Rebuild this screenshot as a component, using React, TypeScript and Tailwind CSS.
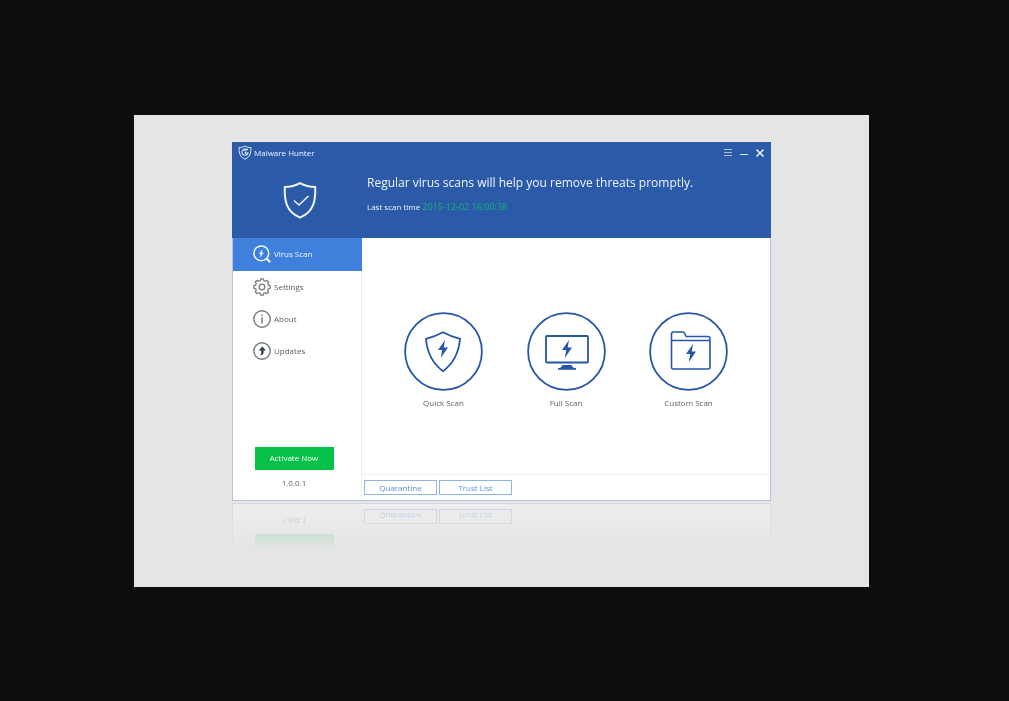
import type { ReactNode } from "react";

const Bolt = () => <path d="M7 0 0 10h4.200L2.800 18 10 7.600H5.700Z" />;

const LogoIcon = () => (
  <svg viewBox="0 0 14 15" className="h-[15px] w-[14px]" fill="none" stroke="#dfe7f6">
    <path d="M7 1C5 2.200 3 2.600 1 2.600 1 8 2 12 7 14.200 12 12 13 8 13 2.600 11 2.600 9 2.200 7 1Z" />
    <path d="M9.400 5.200A3.100 3.100 0 1 0 10 8H7.400M5 4.200l2 1.200 3-1.400M7.400 6.500v2.500" strokeWidth="1.100" />
  </svg>
);

const ShieldCheckIcon = () => (
  <svg viewBox="0 0 34 38" className="h-[38px] w-[34px]" fill="none" stroke="#eef3fb" strokeWidth="2">
    <path d="M17 1.200C12 4 7 5 1.800 5c-.6 14 1.600 25 15.200 30.600C30.600 30 32.800 19 32.200 5 27 5 22 4 17 1.200Z" />
    <path d="m11 18.500 5 4.500 9.500-9" strokeWidth="1.600" />
  </svg>
);

const ScanIcon = () => (
  <svg viewBox="0 0 18 18" className="size-[18px]" fill="none" stroke="#f2f7ff" strokeWidth="1.500">
    <circle cx="8.300" cy="8.300" r="7.400" />
    <path d="m13.500 13.500 3.700 3.700" strokeWidth="2.200" />
    <g transform="translate(6.300 4.800) scale(.4)" fill="#f2f7ff" strokeWidth="1">
      <Bolt />
    </g>
  </svg>
);

const gearPoints = Array.from({ length: 8 }, (_, i) =>
  [
    [-8, 8.3],
    [8, 8.3],
    [16, 6.6],
    [29, 6.6],
  ].map(([offset, r]) => {
    const angle = ((i * 45 + offset) * Math.PI) / 180;
    return `${(9 + r * Math.sin(angle)).toFixed(2)},${(9 - r * Math.cos(angle)).toFixed(2)}`;
  }),
)
  .flat()
  .join(" ");

const GearIcon = () => (
  <svg viewBox="0 0 18 18" className="size-[18px]" fill="none" stroke="#777b80" strokeWidth="1.300" strokeLinejoin="round">
    <polygon points={gearPoints} />
    <circle cx="9" cy="9" r="2.800" />
  </svg>
);

const InfoIcon = () => (
  <svg viewBox="0 0 18 18" className="size-[18px]" fill="none" stroke="#777b80" strokeWidth="1.400">
    <circle cx="9" cy="9" r="8.200" />
    <path d="M9 4.500v1.500M9 7.200v6.300" strokeWidth="1.500" />
  </svg>
);

const UpdateIcon = () => (
  <svg viewBox="0 0 18 18" className="size-[18px]" fill="none" stroke="#777b80" strokeWidth="1.400">
    <circle cx="9" cy="9" r="8.200" />
    <path d="M9.300 4.600 5.600 8.600h2.600v2.200c0 1-.4 1.900-1.400 2.800 2.500-.5 3.800-1.500 3.800-3.300V8.600h2.400Z" fill="#2f3e4c" stroke="none" />
  </svg>
);

const QuickScanIcon = () => (
  <svg viewBox="0 0 79 79" className="size-[79px]" fill="none" stroke="#2656a8" strokeWidth="1.800">
    <circle cx="39.500" cy="39.500" r="38.400" />
    <path d="M39 20.200c-5.500 3-11 5-17 6.600C23 40 28 51 39 59.200 50 51 55 40 56 26.800c-6-1.600-11.500-3.600-17-6.600Z" />
    <g transform="translate(34 28)" fill="#2656a8" stroke="none">
      <Bolt />
    </g>
  </svg>
);

const FullScanIcon = () => (
  <svg viewBox="0 0 79 79" className="size-[79px]" fill="none" stroke="#2656a8" strokeWidth="1.800">
    <circle cx="39.500" cy="39.500" r="38.400" />
    <rect x="19" y="24" width="42" height="26.500" rx="1" />
    <path d="M35.500 53h9l1.500 2.500 3 .8v1.400H31v-1.400l3-.8Z" fill="#2656a8" stroke="none" />
    <g transform="translate(35 28)" fill="#2656a8" stroke="none">
      <Bolt />
    </g>
  </svg>
);

const CustomScanIcon = () => (
  <svg viewBox="0 0 79 79" className="size-[79px]" fill="none" stroke="#2656a8" strokeWidth="1.600">
    <circle cx="39.500" cy="39.500" r="38.400" strokeWidth="1.800" />
    <path d="M22.500 28.500v-6.500q0-2 2-2h9q1.500 0 2.500 2l1.200 2.500H59q2 0 2 2V55q0 2-2 2H24.500q-2 0-2-2V28.500H61" />
    <g transform="translate(37 32)" fill="#2656a8" stroke="none">
      <Bolt />
    </g>
  </svg>
);

type Item = { label: string; icon: ReactNode };

const navItems: Item[] = [
  { label: "Virus Scan", icon: <ScanIcon /> },
  { label: "Settings", icon: <GearIcon /> },
  { label: "About", icon: <InfoIcon /> },
  { label: "Updates", icon: <UpdateIcon /> },
];

const scans: Item[] = [
  { label: "Quick Scan", icon: <QuickScanIcon /> },
  { label: "Full Scan", icon: <FullScanIcon /> },
  { label: "Custom Scan", icon: <CustomScanIcon /> },
];

const Header = () => (
  <header className="bg-[#2b5aa9] pb-[18px] text-[#f0f4fc]">
    <div className="flex h-[22px] items-center justify-between px-1.5">
      <div className="flex items-center gap-0.5">
        <LogoIcon />
        <span>Malware Hunter</span>
      </div>
      <div className="flex items-center gap-1.5">
        <button type="button" aria-label="Menu">
          <svg viewBox="0 0 10 10" className="size-2.5" stroke="#a9bce0">
            <path d="M1 1.500h8M1 4.500h8M1 7.500h8" />
          </svg>
        </button>
        <button type="button" aria-label="Minimize">
          <svg viewBox="0 0 10 10" className="size-2.5" stroke="#dce5f5">
            <path d="M1 6.500h8" />
          </svg>
        </button>
        <button type="button" aria-label="Close">
          <svg viewBox="0 0 10 10" className="size-2.5" stroke="#f4f7fc" strokeWidth="1.500">
            <path d="m1.500 1.500 7 7m0-7-7 7" />
          </svg>
        </button>
      </div>
    </div>
    <div className="flex pt-2">
      <div className="flex w-[135px] shrink-0 justify-center pt-2.5">
        <ShieldCheckIcon />
      </div>
      <div className="pt-0.5">
        <h1 className="text-[12px] leading-[18px] font-medium">Regular virus scans will help you remove threats promptly.</h1>
        <p className="pt-[9px]">
          Last scan time <time className="text-[9px] text-[#13b573]">2015-12-02 16:00:38</time>
        </p>
      </div>
    </div>
  </header>
);

const Sidebar = () => (
  <aside className="flex w-[129px] shrink-0 flex-col border-r border-[#eceef2]">
    <nav>
      {navItems.map(({ label, icon }, i) => (
        <a
          key={label}
          href="#"
          className={
            i === 0
              ? "-mr-px flex h-[33px] items-center gap-[3px] bg-[#3f80dc] pl-5 text-[#f2f7ff]"
              : "flex h-8 items-center gap-[3px] pl-5 text-[#5c5f64]"
          }
        >
          {icon}
          {label}
        </a>
      ))}
    </nav>
    <div className="mt-auto flex flex-col items-center gap-[7px] pr-1.5 pb-[11px]">
      <button type="button" className="h-[23px] w-[79px] bg-[#05c148] text-white">
        Activate Now
      </button>
      <span className="text-[#5c5f64]">1.0.0.1</span>
    </div>
  </aside>
);

export default function App() {
  return (
    <div className="flex min-h-screen items-center justify-center bg-[#0d0d0d] pr-1.5 font-['Open_Sans',sans-serif] text-[8px] leading-3">
      <main className="w-full max-w-[735px] bg-[#e5e5e5] px-[98px] pt-[27px] pb-[86px]">
        <div className="bg-white [-webkit-box-reflect:below_2px_linear-gradient(transparent_87%,rgba(255,255,255,0.35))]">
          <Header />
          <div className="flex border border-t-0 border-[#b4c2df]">
            <Sidebar />
            <div className="flex grow flex-col">
              <div className="flex h-[236px] justify-between px-[42px] pt-[74px]">
                {scans.map(({ label, icon }) => (
                  <button key={label} type="button" className="flex w-[79px] flex-col items-center gap-1.5 self-start text-[#5c5f64]">
                    {icon}
                    {label}
                  </button>
                ))}
              </div>
              <div className="flex gap-0.5 border-t border-[#eceef2] px-0.5 py-[5px] text-[#5d92e0]">
                <button type="button" className="h-[15px] w-[73px] border border-[#8eb2ea] leading-[13px]">
                  Quarantine
                </button>
                <button type="button" className="h-[15px] w-[73px] border border-[#8eb2ea] leading-[13px]">
                  Trust List
                </button>
              </div>
            </div>
          </div>
        </div>
      </main>
    </div>
  );
}
